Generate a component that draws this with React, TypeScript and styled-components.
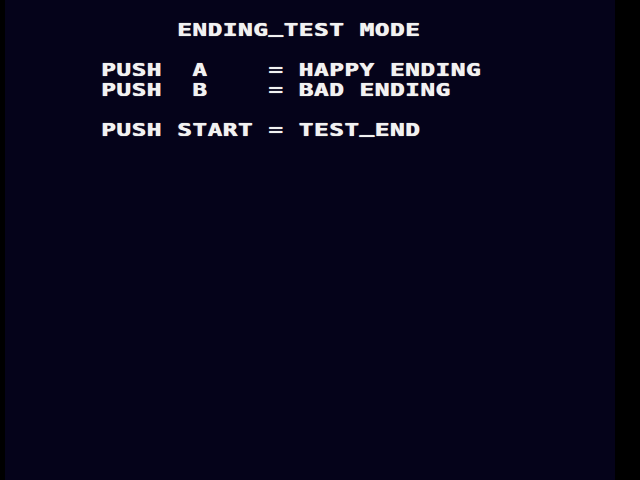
import styled, { createGlobalStyle } from "styled-components";

const GlobalStyle = createGlobalStyle`
  html, body {
    margin: 0;
    padding: 0;
    background: #000;
  }
`;

// one character cell of the debug font, in px
const CELL = 15.2;

const menuLines = [
  { id: "a", text: "PUSH  A    = HAPPY ENDING" },
  { id: "b", text: "PUSH  B    = BAD ENDING" },
  { id: "gap", text: "" },
  { id: "start", text: "PUSH START = TEST_END" },
];

// the debug font draws "_" on the baseline, so lift it up a little
const renderText = (text: string) => {
  const parts = text.split("_");
  return parts.map((part, i) => (
    <span key={i}>
      {part}
      {i < parts.length - 1 ? <Low>_</Low> : null}
    </span>
  ));
};

const App = () => {
  return (
    <Screen>
      <GlobalStyle />
      <Panel>
        <Menu>
          <Line $indent={5}>{renderText("ENDING_TEST MODE")}</Line>
          <Line>{" "}</Line>
          {menuLines.map((line) => {
            return <Line key={line.id}>{renderText(line.text || " ")}</Line>;
          })}
        </Menu>
      </Panel>
    </Screen>
  );
};

const Screen = styled.div`
  display: flex;
  width: 640px;
  height: 480px;
  background: #000;
  overflow: hidden;
`;

const Panel = styled.div`
  width: 610px;
  height: 100%;
  margin-left: 5px;
  background: #05031a;
`;

const Menu = styled.div`
  display: flex;
  flex-direction: column;
  padding: 20px 0 0 96px;
`;

const Line = styled.div<{ $indent?: number }>`
  height: 20px;
  margin-left: ${(p) => (p.$indent || 0) * CELL}px;
  font-family: "DejaVu Sans Mono", "Liberation Mono", monospace;
  font-weight: bold;
  font-size: 18px;
  line-height: 20px;
  letter-spacing: 0.42px;
  color: #f2f2f2;
  white-space: pre;
  transform: scaleX(1.35);
  transform-origin: left center;
  text-shadow: 0.5px 0 0 #f2f2f2, 0 0 1px rgba(255, 255, 255, 0.6);
`;

const Low = styled.span`
  display: inline-block;
  transform: translateY(-3px);
`;

export default App;
